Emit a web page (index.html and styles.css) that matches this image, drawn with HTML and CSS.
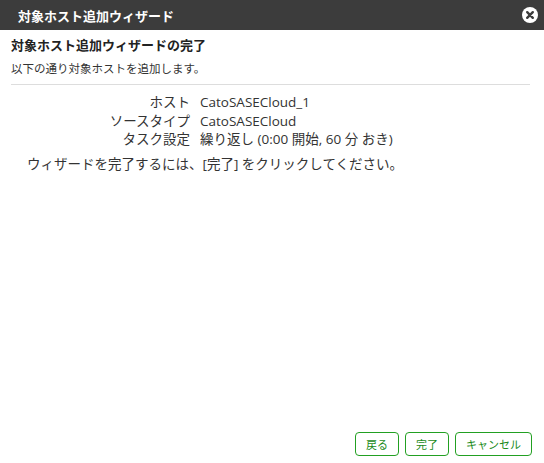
FILE: index.html
```html
<!DOCTYPE html>
<html lang="ja">
<head>
    <meta charset="UTF-8">
    <meta name="viewport" content="width=device-width, initial-scale=1.0">
    <title>対象ホスト追加ウィザード</title>
    <link rel="stylesheet" href="styles.css">
</head>
<body>
    <div class="dialog">
        <div class="titlebar">
            <span class="title">対象ホスト追加ウィザード</span>
            <button class="close" type="button" aria-label="閉じる">
                <svg width="16" height="16" viewBox="0 0 16 16">
                    <circle cx="8" cy="8" r="8" fill="#fff"/>
                    <path d="M5.2 5.2 L10.8 10.8 M10.8 5.2 L5.2 10.8" stroke="#3c3c3c" stroke-width="2.4" stroke-linecap="round"/>
                </svg>
            </button>
        </div>

        <div class="content">
            <h2>対象ホスト追加ウィザードの完了</h2>
            <p class="lead">以下の通り対象ホストを追加します。</p>

            <dl class="summary">
                <dt>ホスト</dt>
                <dd>CatoSASECloud_1</dd>
                <dt>ソースタイプ</dt>
                <dd>CatoSASECloud</dd>
                <dt>タスク設定</dt>
                <dd>繰り返し (0:00 開始, 60 分 おき)</dd>
            </dl>

            <p class="note">ウィザードを完了するには、[完了] をクリックしてください。</p>
        </div>

        <div class="footer">
            <button type="button" class="btn">戻る</button>
            <button type="button" class="btn">完了</button>
            <button type="button" class="btn">キャンセル</button>
        </div>
    </div>
</body>
</html>
```

FILE: styles.css
```css
html, body {
    height: 100%;
}

body {
    margin: 0;
    font-family: "Open Sans", "Noto Sans CJK JP", sans-serif;
    font-size: 12px;
    color: #333;
    background-color: #fff;
}

.dialog {
    display: flex;
    flex-direction: column;
    height: 100%;
}

.titlebar {
    display: flex;
    align-items: center;
    justify-content: space-between;
    height: 30px;
    padding: 0 6px 0 18px;
    background-color: #3c3c3c;
    color: #fff;
}

.title {
    font-family: "Noto Sans CJK JP", sans-serif;
    font-weight: bold;
    font-size: 13px;
}

.close {
    display: flex;
    padding: 0;
    border: none;
    background: none;
    cursor: pointer;
}

.content {
    padding: 0 14px 0 11px;
}

h2 {
    margin: 8px 0 0;
    font-family: "Noto Sans CJK JP", sans-serif;
    font-size: 13px;
    font-weight: bold;
    line-height: 14px;
    color: #222;
}

.lead {
    margin: 9px 0 0;
    font-size: 11.5px;
    line-height: 16px;
    padding-bottom: 7px;
    border-bottom: 1px solid #ddd;
}

.summary {
    display: grid;
    grid-template-columns: 179px auto;
    column-gap: 10px;
    margin: 8px 0 0;
    font-size: 13.5px;
    line-height: 18.5px;
}

.summary dt {
    text-align: right;
}

.summary dd {
    margin: 0;
}

.note {
    margin: 6px 0 0 16px;
    font-size: 13.5px;
    line-height: 18px;
}

.footer {
    display: flex;
    justify-content: flex-end;
    gap: 6px;
    margin-top: auto;
    padding: 0 12px 7px 0;
}

.btn {
    height: 24px;
    padding: 0 10px;
    font-family: "Noto Sans CJK JP", sans-serif;
    font-size: 11px;
    color: #1a8a1a;
    background-color: #fff;
    border: 1px solid #22a022;
    border-radius: 4px;
    cursor: pointer;
}

.btn:hover {
    background-color: #f0faf0;
}
```
